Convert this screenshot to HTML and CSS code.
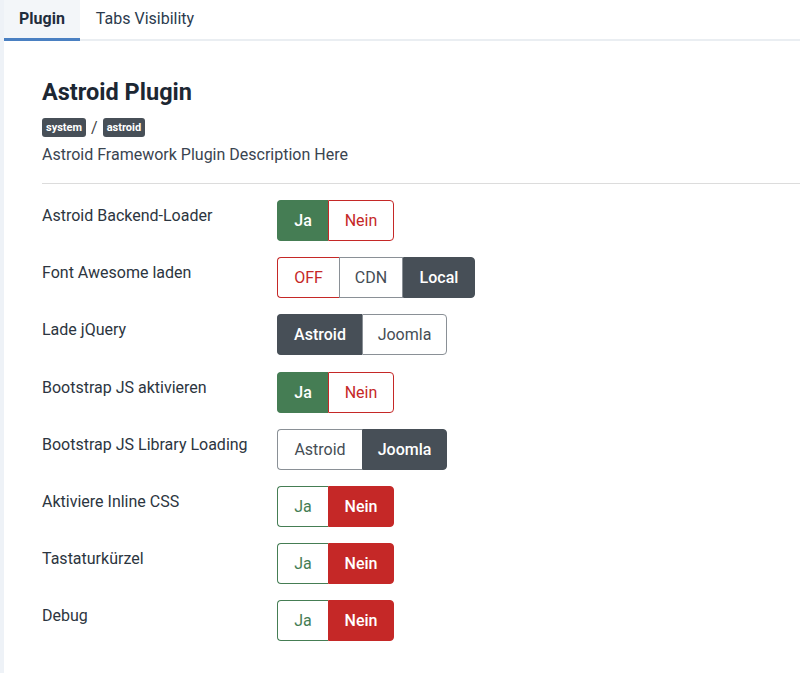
FILE: index.html
```html
<!DOCTYPE html>
<html lang="de">
<head>
  <meta charset="UTF-8">
  <title>Astroid Plugin</title>
  <link rel="stylesheet" href="styles.css">
</head>
<body>

<div class="page">
  <div class="tabs">
    <div class="tab active">Plugin</div>
    <div class="tab">Tabs Visibility</div>
  </div>

  <div class="content">
    <h1>Astroid Plugin</h1>
    <div class="crumbs">
      <span class="badge">system</span> / <span class="badge">astroid</span>
    </div>
    <p class="desc">Astroid Framework Plugin Description Here</p>
    <hr>

    <div class="row">
      <label>Astroid Backend-Loader</label>
      <div class="switch">
        <span class="opt ok on">Ja</span><span class="opt no">Nein</span>
      </div>
    </div>

    <div class="row">
      <label>Font Awesome laden</label>
      <div class="switch">
        <span class="opt no w-off">OFF</span><span class="opt dk w-cdn">CDN</span><span class="opt dk on w-local">Local</span>
      </div>
    </div>

    <div class="row">
      <label>Lade jQuery</label>
      <div class="switch">
        <span class="opt dk on w-85">Astroid</span><span class="opt dk w-85">Joomla</span>
      </div>
    </div>

    <div class="row">
      <label>Bootstrap JS aktivieren</label>
      <div class="switch">
        <span class="opt ok on">Ja</span><span class="opt no">Nein</span>
      </div>
    </div>

    <div class="row">
      <label>Bootstrap JS Library Loading</label>
      <div class="switch">
        <span class="opt dk w-85">Astroid</span><span class="opt dk on w-85">Joomla</span>
      </div>
    </div>

    <div class="row">
      <label>Aktiviere Inline CSS</label>
      <div class="switch">
        <span class="opt ok">Ja</span><span class="opt no on">Nein</span>
      </div>
    </div>

    <div class="row">
      <label>Tastaturkürzel</label>
      <div class="switch">
        <span class="opt ok">Ja</span><span class="opt no on">Nein</span>
      </div>
    </div>

    <div class="row">
      <label>Debug</label>
      <div class="switch">
        <span class="opt ok">Ja</span><span class="opt no on">Nein</span>
      </div>
    </div>
  </div>
</div>

</body>
</html>
```

FILE: styles.css
```css
body {
  margin: 0;
  background-color: #fff;
  color: #22262a;
  font-family: Roboto, "Liberation Sans", sans-serif;
  font-size: 16px;
}

.page {
  border-left: 4px solid #eef2f7;
  min-height: 673px;
  box-sizing: border-box;
}

.tabs {
  display: flex;
  height: 41px;
  border-bottom: 2px solid #eaeef2;
  box-sizing: border-box;
}

.tab {
  padding: 0 16px;
  line-height: 38px;
  font-size: 16px;
  color: #2b3a4d;
}

.tab.active {
  background-color: #f3f6f9;
  font-weight: bold;
  color: #1f2d3d;
  border-bottom: 3px solid #4a80c2;
  margin-bottom: -2px;
  padding: 0 15px;
  line-height: 37px;
}

.content {
  padding: 36px 0 0 38px;
}

h1 {
  margin: 0;
  font-size: 23.5px;
  line-height: 30px;
  font-weight: bold;
  color: #1c2733;
}

.crumbs {
  margin-top: 10px;
  height: 21px;
  display: flex;
  align-items: center;
  gap: 5px;
  color: #444;
  font-size: 16px;
}

.badge {
  display: inline-block;
  background-color: #474f57;
  color: #fff;
  font-size: 11px;
  font-weight: bold;
  line-height: 19px;
  padding: 0 4px;
  border-radius: 3px;
}

.desc {
  margin: 7px 0 0;
  line-height: 20px;
  font-size: 16px;
  color: #3a4450;
}

hr {
  margin: 18px 0 16px;
  border: 0;
  border-top: 1px solid #dcdcdc;
}

.row {
  display: flex;
  align-items: flex-start;
  height: 57.2px;
}

.row label {
  width: 235px;
  font-size: 16px;
  line-height: 20px;
  padding-top: 6px;
  color: #2c3540;
}

.switch {
  display: flex;
  height: 41px;
}

.opt {
  display: flex;
  align-items: center;
  justify-content: center;
  box-sizing: border-box;
  height: 41px;
  padding: 0 16px;
  font-size: 16px;
  background-color: #fff;
  border: 1px solid;
}

.opt:first-child {
  border-radius: 4px 0 0 4px;
  border-right: 0;
}

.opt:last-child {
  border-radius: 0 4px 4px 0;
}

.opt.ok { width: 51px; color: #457d54; border-color: #457d54; }
.opt.no { width: 66px; color: #c52827; border-color: #c52827; }
.opt.dk { color: #454d55; border-color: #8a9096; }

.opt.ok.on { background-color: #457d54; color: #fff; font-weight: 500; }
.opt.no.on { background-color: #c52827; color: #fff; font-weight: 500; }
.opt.dk.on { background-color: #474f57; border-color: #474f57; color: #fff; font-weight: 500; }

.opt.w-off { width: 62px; border-right: 0; }
.opt.w-cdn { width: 64px; border-left: 1px solid #8a9096; }
.opt.w-local { width: 72px; }
.opt.w-85 { width: 85px; }
```
